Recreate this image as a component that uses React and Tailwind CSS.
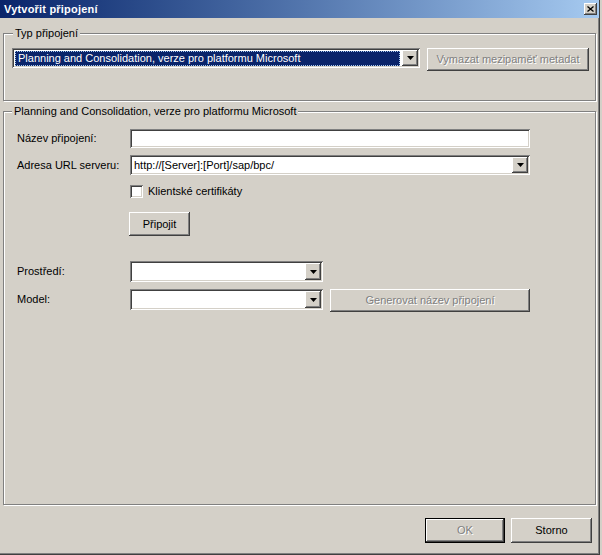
import React from "react";

const raised =
  "bg-[#d4d0c8] shadow-[inset_-1px_-1px_0_#404040,inset_1px_1px_0_#ffffff,inset_-2px_-2px_0_#808080,inset_2px_2px_0_#d4d0c8]";
const sunken =
  "bg-white shadow-[inset_1px_1px_0_#808080,inset_-1px_-1px_0_#ffffff,inset_2px_2px_0_#404040,inset_-2px_-2px_0_#d4d0c8]";
const disabledText = "text-[#808080] [text-shadow:1px_1px_0_#ffffff]";

function Arrow() {
  return (
    <svg width="7" height="4" viewBox="0 0 7 4" className="block">
      <polygon points="0,0 7,0 3.5,4" fill="#000" />
    </svg>
  );
}

function DropBtn() {
  return (
    <div className={`w-[16px] h-full flex items-center justify-center ${raised}`}>
      <Arrow />
    </div>
  );
}

function Combo({ w, h, children }) {
  return (
    <div
      className={`flex items-stretch p-[2px] ${sunken}`}
      style={{ width: w, height: h }}
    >
      <div className="flex-1 flex items-center pl-[2px] overflow-hidden whitespace-nowrap">
        {children}
      </div>
      <DropBtn />
    </div>
  );
}

function Button({ w, h, disabled, isDefault, children }) {
  const inner = (
    <div
      className={`flex items-center justify-center ${raised} ${disabled ? disabledText : "text-black"}`}
      style={{ width: isDefault ? w - 2 : w, height: isDefault ? h - 2 : h }}
    >
      {children}
    </div>
  );
  if (isDefault) {
    return <div className="border border-black">{inner}</div>;
  }
  return inner;
}

function Group({ label, labelLeft, className, children }) {
  return (
    <div
      className={`relative border border-[#808080] shadow-[inset_1px_1px_0_#ffffff,1px_1px_0_#ffffff] ${className}`}
    >
      <span
        className={`absolute top-[-8px] px-[2px] bg-[#d4d0c8] leading-[14px] whitespace-nowrap`}
        style={{ left: labelLeft }}
      >
        {label}
      </span>
      {children}
    </div>
  );
}

export default function App() {
  return (
    <div className="w-[602px] h-[555px] bg-[#d4d0c8] flex overflow-hidden font-['Liberation_Sans',Arial,sans-serif] text-[11px] text-black leading-[13px]">
      <div className="w-[600px] h-[555px] flex flex-col border-r border-b border-r-[#404040] border-b-[#404040] shadow-[inset_-1px_-1px_0_#808080]">
        {/* Title bar */}
        <div className="h-[18px] flex items-center justify-between pl-[4px] pr-[2px] bg-gradient-to-r from-[#0a246a] to-[#a6caf0]">
          <span className="text-white font-bold text-[11px] leading-[13px] tracking-[0.2px]">
            Vytvořit připojení
          </span>
          <div className={`w-[13px] h-[12px] flex items-center justify-center ${raised}`}>
            <svg width="7" height="6" viewBox="0 0 7 6">
              <path d="M0.5 0.5 L6.5 5.5 M6.5 0.5 L0.5 5.5" stroke="#000" strokeWidth="1.3" />
            </svg>
          </div>
        </div>

        {/* Group 1 */}
        <Group label="Typ připojení" labelLeft="9px" className="mt-[15px] ml-[3px] w-[593px] h-[68px]">
          <div className="flex items-start pl-[8px] pt-[14px] gap-[7px]">
            <div className={`flex items-stretch p-[2px] w-[408px] h-[20px] ${sunken}`}>
              <div className="flex-1 flex items-center pl-[1px] pr-[2px]">
                <div className="w-full h-[15px] bg-[#0a246a] text-white flex items-center pl-[3px] whitespace-nowrap outline outline-1 outline-dotted outline-[#a6caf0] -outline-offset-1">
                  Planning and Consolidation, verze pro platformu Microsoft
                </div>
              </div>
              <DropBtn />
            </div>
            <Button w={162} h={23} disabled>
              Vymazat mezipaměť metadat
            </Button>
          </div>
        </Group>

        {/* Group 2 */}
        <Group
          label="Planning and Consolidation, verze pro platformu Microsoft"
          labelLeft="8px"
          className="mt-[10px] ml-[3px] w-[593px] h-[394px]"
        >
          <div className="flex flex-col pl-[13px] pt-[17px]">
            <div className="flex items-center h-[19px]">
              <span className="w-[113px]">Název připojení:</span>
              <div className={`w-[400px] h-[19px] ${sunken}`} />
            </div>
            <div className="flex items-center h-[20px] mt-[7px]">
              <span className="w-[113px]">Adresa URL serveru:</span>
              <Combo w={400} h={20}>http://[Server]:[Port]/sap/bpc/</Combo>
            </div>
            <div className="flex items-center h-[13px] mt-[10px] pl-[113px]">
              <div className={`w-[13px] h-[13px] ${sunken}`} />
              <span className="ml-[5px]">Klientské certifikáty</span>
            </div>
            <div className="flex mt-[14px] pl-[112px]">
              <Button w={61} h={24}>Připojit</Button>
            </div>
            <div className="flex items-center h-[21px] mt-[25px]">
              <span className="w-[113px]">Prostředí:</span>
              <Combo w={193} h={21} />
            </div>
            <div className="flex items-start mt-[7px]">
              <span className="w-[113px] h-[21px] flex items-center">Model:</span>
              <Combo w={193} h={21} />
              <div className="ml-[7px]">
                <Button w={200} h={23} disabled>
                  Generovat název připojení
                </Button>
              </div>
            </div>
          </div>
        </Group>

        {/* Bottom buttons */}
        <div className="flex justify-end gap-[6px] mt-[13px] pr-[7px]">
          <Button w={80} h={25} disabled isDefault>
            OK
          </Button>
          <Button w={81} h={25}>Storno</Button>
        </div>
      </div>
    </div>
  );
}
